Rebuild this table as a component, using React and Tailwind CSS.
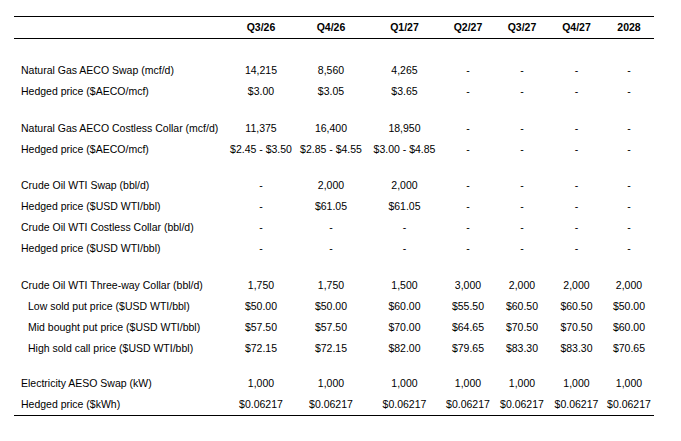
const cols = ['Q3/26', 'Q4/26', 'Q1/27', 'Q2/27', 'Q3/27', 'Q4/27', '2028']

const groups = [
  {
    gap: 'h-[21px]',
    rows: [
      ['Natural Gas AECO Swap (mcf/d)', '14,215', '8,560', '4,265', '-', '-', '-', '-'],
      ['Hedged price ($AECO/mcf)', '$3.00', '$3.05', '$3.65', '-', '-', '-', '-'],
    ],
  },
  {
    gap: 'h-[16px]',
    rows: [
      ['Natural Gas AECO Costless Collar (mcf/d)', '11,375', '16,400', '18,950', '-', '-', '-', '-'],
      ['Hedged price ($AECO/mcf)', '$2.45 - $3.50', '$2.85 - $4.55', '$3.00 - $4.85', '-', '-', '-', '-'],
    ],
  },
  {
    gap: 'h-[15px]',
    rows: [
      ['Crude Oil WTI Swap (bbl/d)', '-', '2,000', '2,000', '-', '-', '-', '-'],
      ['Hedged price ($USD WTI/bbl)', '-', '$61.05', '$61.05', '-', '-', '-', '-'],
      ['Crude Oil WTI Costless Collar (bbl/d)', '-', '-', '-', '-', '-', '-', '-'],
      ['Hedged price ($USD WTI/bbl)', '-', '-', '-', '-', '-', '-', '-'],
    ],
  },
  {
    gap: 'h-[16px]',
    rows: [
      ['Crude Oil WTI Three-way Collar (bbl/d)', '1,750', '1,750', '1,500', '3,000', '2,000', '2,000', '2,000'],
      ['Low sold put price ($USD WTI/bbl)', '$50.00', '$50.00', '$60.00', '$55.50', '$60.50', '$60.50', '$50.00', true],
      ['Mid bought put price ($USD WTI/bbl)', '$57.50', '$57.50', '$70.00', '$64.65', '$70.50', '$70.50', '$60.00', true],
      ['High sold call price ($USD WTI/bbl)', '$72.15', '$72.15', '$82.00', '$79.65', '$83.30', '$83.30', '$70.65', true],
    ],
  },
  {
    gap: 'h-[14px]',
    rows: [
      ['Electricity AESO Swap (kW)', '1,000', '1,000', '1,000', '1,000', '1,000', '1,000', '1,000'],
      ['Hedged price ($kWh)', '$0.06217', '$0.06217', '$0.06217', '$0.06217', '$0.06217', '$0.06217', '$0.06217'],
    ],
  },
]

const grid = 'grid grid-cols-[214px_66px_74px_73px_54px_54px_55px_50px]'

function Row({ row }) {
  const [label, ...rest] = row
  const indent = row[8] === true
  const values = rest.slice(0, 7)
  return (
    <div className={`${grid} h-[21px] items-center`}>
      <div className={indent ? 'pl-[14px]' : 'pl-[7px]'}>{label}</div>
      {values.map((v, i) => (
        <div key={i} className="text-center whitespace-nowrap">{v}</div>
      ))}
    </div>
  )
}

export default function App() {
  return (
    <div className="w-[681px] h-[441px] bg-white pt-4 pl-[14px] text-[10.5px] text-black font-['Liberation_Sans',Arial,sans-serif]">
      <div className="w-[640px]">
        {/* header */}
        <div className={`${grid} h-[23px] items-center border-t border-b border-black font-bold`}>
          <div />
          {cols.map(c => (
            <div key={c} className="text-center">{c}</div>
          ))}
        </div>

        <div className="border-b border-black">
          {groups.map((g, gi) => (
            <div key={gi}>
              <div className={g.gap} />
              {g.rows.map((r, ri) => (
                <Row key={ri} row={r} />
              ))}
            </div>
          ))}
        </div>
      </div>
    </div>
  )
}
